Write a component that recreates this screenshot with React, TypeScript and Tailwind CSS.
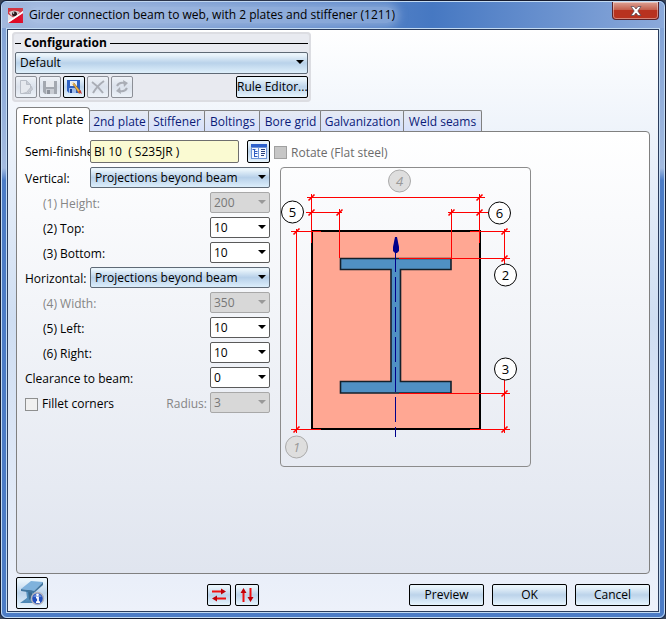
import { useState } from "react";
import clsx from "clsx";

const glossy =
  "border border-black bg-linear-to-b from-[#e9f4fb] from-10% via-[#bcd3ea] via-50% to-[#e6f4fd]";
const faded =
  "border border-[#8c8f96] bg-linear-to-b from-[#eef2f7] via-[#dbe2ec] to-[#edf2f8]";

const tabs = [
  { label: "2nd plate", width: "w-[59px]" },
  { label: "Stiffener", width: "w-[56px]" },
  { label: "Boltings", width: "w-[55px]" },
  { label: "Bore grid", width: "w-[61px]" },
  { label: "Galvanization", width: "w-[83px]" },
  { label: "Weld seams", width: "w-[77px]" },
];

function DropArrow({ disabled = false }: { disabled?: boolean }) {
  return (
    <svg
      viewBox="0 0 8 4"
      className={clsx(
        "pointer-events-none absolute top-2 right-1 h-1 w-2",
        disabled ? "fill-[#999]" : "fill-black"
      )}
    >
      <path d="M0 0h8L4 4z" />
    </svg>
  );
}

function NumberSelect({
  id,
  value,
  disabled = false,
}: {
  id: string;
  value: string;
  disabled?: boolean;
}) {
  return (
    <div className="relative w-[60px]">
      <select
        id={id}
        disabled={disabled}
        className={clsx(
          "block h-[21px] w-full appearance-none rounded-xs border pl-[3px] opacity-100",
          disabled ? "border-[#a8a8a8] bg-[#d8d8d8] text-[#777]" : "border-[#5a5a5a] bg-white"
        )}
      >
        <option>{value}</option>
      </select>
      <DropArrow disabled={disabled} />
    </div>
  );
}

function NumberRow({
  id,
  label,
  value,
  disabled = false,
  indent = true,
}: {
  id: string;
  label: string;
  value: string;
  disabled?: boolean;
  indent?: boolean;
}) {
  return (
    <div className="flex h-[25px] items-start justify-between">
      <label
        htmlFor={id}
        className={clsx("pt-1", indent && "pl-[18px]", disabled && "text-[#858585]")}
      >
        {label}
      </label>
      <NumberSelect id={id} value={value} disabled={disabled} />
    </div>
  );
}

function ModeRow({ id, label }: { id: string; label: string }) {
  return (
    <div className="flex h-[25px] items-start">
      <label htmlFor={id} className="w-[65px] pt-1">
        {label}
      </label>
      <div className="relative w-[180px]">
        <select
          id={id}
          className="block h-[21px] w-full appearance-none rounded-xs border border-[#5f6a76] bg-linear-to-b from-[#e9f4fb] from-10% via-[#b7d0e9] via-50% to-[#dceefb] pl-1"
        >
          <option>Projections beyond beam</option>
        </select>
        <DropArrow />
      </div>
    </div>
  );
}

/* ---------- icons ---------- */

function AppIcon() {
  return (
    <svg viewBox="0 0 15 15" className="size-[15px] shrink-0">
      <rect width="15" height="15" fill="#e8e4e6" />
      <path d="M0 0h15v3L6 10 0 6z" fill="#d3343f" />
      <path d="M1 4q5-3 11 0l-5 5q-5-1-6-5z" fill="#d9cfd0" />
      <circle cx="6.500" cy="6" r="2.500" fill="#2b1a1e" />
      <circle cx="5.500" cy="5" r="0.800" fill="#fff" />
      <path d="M0 15 15 5v10z" fill="#e00a26" />
      <path d="M0 13 15 3v2L0 15z" fill="#fff" />
    </svg>
  );
}

function NewIcon() {
  return (
    <svg viewBox="0 0 16 16" className="size-4" stroke="#b9bec7" fill="#e6e9ee">
      <path d="M2.500 1.500h6l4 4v9h-10z" />
      <path d="M8.500 1.500v4h4M13.500 7.500l1 3-5 4h-5l4-1z" fill="#c8ccd4" />
    </svg>
  );
}

function SaveIcon() {
  return (
    <svg viewBox="0 0 16 16" className="size-4">
      <path d="M1 2h14v13H3l-2-2z" fill="#a3a8b0" />
      <path d="M4 2h8v6H4z" fill="#e6e9ee" />
      <path d="M4 10h8v5H4z" fill="#c9cdd4" />
      <path d="M5 11h3v4H5z" fill="#8d929b" />
    </svg>
  );
}

function SaveAsIcon() {
  return (
    <svg viewBox="0 0 16 16" className="size-4">
      <path d="M1 1h13v13H3l-2-2z" fill="#2f62c4" />
      <path d="M4 2h7v5H4z" fill="#e8effa" />
      <path d="M3 9h7v5H3z" fill="#9fbdeb" />
      <path d="M4 10h2v4H4z" fill="#1d418f" />
      <path d="m6 4 2 0 7 9-2 1.500z" fill="#f0b648" stroke="#8d5f22" strokeWidth=".6" />
      <path d="m12 13 2.500-2 1.500 4z" fill="#c83a35" />
      <path d="m5 3 3 .8L6.500 5.500z" fill="#fdeecb" />
    </svg>
  );
}

function DeleteIcon() {
  return (
    <svg viewBox="0 0 16 16" className="size-4" stroke="#a9adb5" strokeWidth="2" fill="none">
      <path d="M2 3q6 4 11 11M14 2Q7 7 3 14" />
    </svg>
  );
}

function RefreshIcon() {
  return (
    <svg viewBox="0 0 16 16" className="size-4" fill="none" stroke="#a9adb5" strokeWidth="2">
      <path d="M3 7q2-4 7-3M13 9q-2 4-7 3" />
      <path d="M9 1l5 3-4 4zM7 15l-5-3 4-4z" fill="#a9adb5" stroke="none" />
    </svg>
  );
}

function CatalogIcon() {
  return (
    <svg viewBox="0 0 16 16" className="size-4">
      <path d="M0 0h16v15H0z" fill="#6f95d8" />
      <path d="M0 0h16v3H0z" fill="#2f62cc" />
      <path d="M1 4h6v10H1zM8 4h7v10H8z" fill="#f5f9ff" />
      <path d="M1.500 5.500h3M3.500 5v8M4 7.500h2.500M4 9.500h2.500M4 12.500h2.500" stroke="#2f5cc0" />
      <path d="M10 5.500h4M10 7.500h4M10 9.500h4M10 11.500h3" stroke="#27407c" />
    </svg>
  );
}

function BeamInfoIcon() {
  return (
    <svg viewBox="0 0 26 26" className="size-[26px]">
      <path d="M1 23 8 18l11-1-4 6z" fill="#4e88b5" />
      <path d="M7 10l8-1v10l-9 3 2-4z" fill="#5590bd" />
      <path d="M9 10l4 0v8l-3 2z" fill="#38698f" />
      <path d="M2 9 12 1l12 1-9 9z" fill="#7fb2dc" />
      <path d="M2 9v2l13 2v-2zM15 11v2l9-8V2z" fill="#42769f" />
      <circle cx="18.500" cy="18.500" r="6" fill="#2350bd" stroke="#b3b4bd" strokeWidth="1.500" />
      <path d="M14.500 16q4-4 8 0v1h-8z" fill="#5f86dc" />
      <path d="M17 17.500h2V22M17 22.200h4" stroke="#fff" strokeWidth="1.800" fill="none" />
      <circle cx="18.500" cy="14.800" r="1.300" fill="#fff" />
    </svg>
  );
}

function SwapIcon({ vertical = false }: { vertical?: boolean }) {
  return (
    <svg viewBox="0 0 16 16" className="size-4">
      {vertical ? (
        <>
          <path d="M4.500 15V5M11.500 1v10" stroke="#f01010" strokeWidth="2" />
          <path d="M1.500 6l3-5 3 5zM8.500 10l3 5 3-5z" fill="#c00008" />
        </>
      ) : (
        <>
          <path d="M1 4.500h10M15 11.500H5" stroke="#f01010" strokeWidth="2" />
          <path d="M10 1.500l5 3-5 3zM6 8.500l-5 3 5 3z" fill="#c00008" />
        </>
      )}
    </svg>
  );
}

/* ---------- plate drawing ---------- */

const ticks = [
  [311.5, 197.5],
  [479.5, 197.5],
  [311.5, 212.5],
  [339.5, 212.5],
  [451.5, 212.5],
  [479.5, 212.5],
  [296.5, 231.5],
  [296.5, 429.5],
  [504.5, 231.5],
  [504.5, 258.5],
  [504.5, 393.5],
  [504.5, 429.5],
];

const callouts = [
  { n: 1, x: 296.5, y: 447, off: true },
  { n: 2, x: 505.5, y: 275 },
  { n: 3, x: 505.5, y: 369 },
  { n: 4, x: 399.5, y: 181, off: true },
  { n: 5, x: 292.5, y: 212 },
  { n: 6, x: 499.5, y: 213 },
];

function PlateDrawing() {
  return (
    <svg viewBox="281 168 249 298" className="block h-[298px] w-[249px]">
      <rect x="312" y="231" width="168" height="198" fill="#ffa793" stroke="#000" strokeWidth="2" />
      <path
        d="M340.500 258.500H451V269.500H400.500V381.500H451V393H340.500V381.500H391V269.500H340.500Z"
        fill="#5090c4"
        stroke="#14202b"
        strokeWidth="1.600"
      />
      <path d="M395.500 247V437" stroke="#00008b" strokeDasharray="25 5" />
      <path d="M395 237h2l2 10v4l-2 2h-2l-2-2v-4z" fill="#00008b" />
      <g stroke="#f00" fill="none">
        <path d="M311.500 194V243M479.500 194V243M307 197.500H485" />
        <path d="M306 212.500H342M339.500 209V258M448 212.500H488M451.500 209V258" />
        <path d="M296.500 229V433M291 231.500H321M291 429.500H321" />
        <path d="M504.500 229V264M470 231.500H510M399 258.500H510" />
        <path d="M504.500 380V433M399 393.500H510M470 429.500H510" />
        {ticks.map(([x, y]) => (
          <path
            key={`${x}-${y}`}
            d={`M${x - 3} ${y + 3}L${x + 3} ${y - 3}`}
            strokeWidth="1.600"
          />
        ))}
      </g>
      {callouts.map((c) => (
        <g key={c.n}>
          <circle
            cx={c.x}
            cy={c.y}
            r="11"
            fill={c.off ? "#dedede" : "#fff"}
            stroke={c.off ? "#aaa" : "#000"}
          />
          <text
            x={c.x}
            y={c.y + 5}
            textAnchor="middle"
            className={clsx("text-[13px]", c.off ? "fill-[#999] italic" : "fill-black")}
          >
            {c.n}
          </text>
        </g>
      ))}
    </svg>
  );
}

/* ---------- dialog ---------- */

function Configuration() {
  return (
    <fieldset className="ml-1 w-[299px] rounded-sm border-2 border-[#dcdde2] bg-[#e8eaf0] px-px pb-[2px]">
      <div className="flex h-[18px] items-center gap-[3px]">
        <span className="h-px w-[6px] bg-black" />
        <span className="font-bold">Configuration</span>
        <span className="h-px flex-1 bg-black" />
      </div>
      <div className="relative">
        <select
          aria-label="Configuration"
          className="block h-[22px] w-full appearance-none rounded-xs border border-[#5f6a76] bg-linear-to-b from-[#eaf4fb] from-10% via-[#b9d2ea] via-50% to-[#dff0fb] pl-1"
        >
          <option>Default</option>
        </select>
        <DropArrow />
      </div>
      <div className="mt-[2px] flex gap-[2px]">
        {[
          { name: "New", icon: <NewIcon /> },
          { name: "Save", icon: <SaveIcon /> },
          { name: "Save as", icon: <SaveAsIcon />, on: true },
          { name: "Delete", icon: <DeleteIcon /> },
          { name: "Refresh", icon: <RefreshIcon /> },
        ].map((b) => (
          <button
            key={b.name}
            aria-label={b.name}
            disabled={!b.on}
            className={clsx(
              "flex size-[22px] items-center justify-center rounded-xs",
              b.on ? glossy : faded
            )}
          >
            {b.icon}
          </button>
        ))}
        <button className={clsx("ml-auto h-[22px] w-[72px] rounded-xs whitespace-nowrap", glossy)}>
          Rule Editor...
        </button>
      </div>
    </fieldset>
  );
}

export default function App() {
  const [active, setActive] = useState("Front plate");

  return (
    <div className="min-h-screen bg-[#3a4558] font-['Open_Sans',sans-serif] text-[12px] leading-4 text-black">
      <div className="flex min-h-screen flex-col rounded-md border border-[#161c30] bg-[#4f7fc8]">
        <div className="flex flex-1 flex-col rounded-md border border-[#c3dbf3] bg-linear-to-b from-[#7d9fd4] from-0% via-[#a4bbe0] via-27% to-[#4c7cc6] to-29% px-1 pb-1">
          <header className="-mx-1 flex h-[26px] items-start rounded-t-md bg-linear-to-r from-[#a3b9de] from-0% via-[#4678c2] via-65% to-[#8ba9da] pl-[6px]">
            <div className="flex h-full flex-1 items-center gap-[6px]">
              <AppIcon />
              <h1 className="rounded-full bg-[#b3c8e8]/50 shadow-[0_0_8px_4px_rgb(179_200_232/0.5)]">
                Girder connection beam to web, with 2 plates and stiffener (1211)
              </h1>
            </div>
            <button
              aria-label="Close"
              className="mr-[5px] flex h-[18px] w-[47px] items-center justify-center rounded-b-sm border border-t-0 border-[#5b2229] bg-linear-to-b from-[#dba195] from-0% via-[#c4604e] via-45% to-[#b8321f] to-50% shadow-[inset_0_0_0_1px_rgb(255_255_255/0.4)]"
            >
              <svg viewBox="0 0 12 10" className="h-[10px] w-3">
                <path
                  d="M1 .5h3l2 2.500 2-2.500h3L7.800 5l3.200 4.500H8L6 7 4 9.500H1L4.200 5z"
                  fill="#fff"
                  stroke="#4f4350"
                  strokeWidth=".7"
                />
              </svg>
            </button>
          </header>

          <main className="flex flex-1 flex-col border border-[#c3dbf3]">
            <div className="flex flex-1 flex-col border border-[#2a3c5c] bg-linear-to-b from-white from-0% via-[#cfdef2] via-50% to-[#edf1fa] pt-[2px] pr-2 pb-px">
              <Configuration />

              <div className="mt-[5px] ml-2 flex flex-1 flex-col">
                <div role="tablist" className="flex h-6 items-end">
                  <button
                    role="tab"
                    aria-selected={active === "Front plate"}
                    onClick={() => setActive("Front plate")}
                    className="relative -mb-px h-[25px] w-[74px] rounded-t-sm border border-b-0 border-[#808080] bg-white"
                  >
                    Front plate
                  </button>
                  {tabs.map((t) => (
                    <button
                      key={t.label}
                      role="tab"
                      aria-selected={active === t.label}
                      onClick={() => setActive(t.label)}
                      className={clsx(
                        "-mx-px box-content h-[19px] rounded-t-xs border border-b-0 border-[#808080] bg-linear-to-b from-[#e6eaf3] to-[#d6e0fb] pt-px whitespace-nowrap text-[#0a1a78]",
                        t.width
                      )}
                    >
                      {t.label}
                    </button>
                  ))}
                </div>

                <section className="flex-1 rounded-sm rounded-tl-none border border-[#808080] bg-linear-to-b from-white to-[#e0e5ef] px-2 pt-2 pb-4">
                  <div className="flex h-[27px] items-start">
                    <label htmlFor="semi" className="w-[65px] pt-1 whitespace-nowrap">
                      Semi-finishe
                    </label>
                    <input
                      id="semi"
                      defaultValue="BI 10  ( S235JR )"
                      className="relative h-[23px] w-[149px] rounded-xs border border-[#6e6e6e] bg-[#fafad2] px-[3px] whitespace-pre"
                    />
                    <button
                      aria-label="Select semi-finished product"
                      className={clsx("ml-2 flex size-[23px] items-center justify-center rounded-xs", glossy)}
                    >
                      <CatalogIcon />
                    </button>
                    <label className="ml-1 flex h-[25px] items-center gap-1 text-[#6b6b6b]">
                      <input
                        type="checkbox"
                        disabled
                        className="size-[13px] appearance-none border border-[#a0a0a0] bg-[#c6c6c6]"
                      />
                      Rotate (Flat steel)
                    </label>
                  </div>

                  <div className="flex gap-[10px]">
                    <div className="w-[245px]">
                      <ModeRow id="vertical" label="Vertical:" />
                      <NumberRow id="height" label="(1) Height:" value="200" disabled />
                      <NumberRow id="top" label="(2) Top:" value="10" />
                      <NumberRow id="bottom" label="(3) Bottom:" value="10" />
                      <ModeRow id="horizontal" label="Horizontal:" />
                      <NumberRow id="width" label="(4) Width:" value="350" disabled />
                      <NumberRow id="left" label="(5) Left:" value="10" />
                      <NumberRow id="right" label="(6) Right:" value="10" />
                      <NumberRow id="clearance" label="Clearance to beam:" value="0" indent={false} />
                      <div className="flex h-[25px] items-start">
                        <label className="flex items-center gap-1 pt-1">
                          <input
                            type="checkbox"
                            className="size-[13px] appearance-none border border-[#8e8f8f] bg-[#f0f0f0] checked:bg-[#5090c4]"
                          />
                          Fillet corners
                        </label>
                        <label htmlFor="radius" className="mr-[3px] ml-auto pt-1 text-[#858585]">
                          Radius:
                        </label>
                        <NumberSelect id="radius" value="3" disabled />
                      </div>
                    </div>
                    <div className="self-start rounded-sm border border-[#8c8c8c]">
                      <PlateDrawing />
                    </div>
                  </div>
                </section>

                <footer className="mt-[2px] flex h-[34px] items-center">
                  <div className="w-[191px]">
                    <button
                      aria-label="Information"
                      className={clsx("flex size-8 items-center justify-center rounded-xs", glossy)}
                    >
                      <BeamInfoIcon />
                    </button>
                  </div>
                  <div className="flex gap-1 pt-1">
                    <button
                      aria-label="Swap horizontally"
                      className={clsx("flex h-[22px] w-6 items-center justify-center rounded-xs", glossy)}
                    >
                      <SwapIcon />
                    </button>
                    <button
                      aria-label="Swap vertically"
                      className={clsx("flex h-[22px] w-6 items-center justify-center rounded-xs", glossy)}
                    >
                      <SwapIcon vertical />
                    </button>
                  </div>
                  <div className="ml-auto flex gap-2 pt-1">
                    {["Preview", "OK", "Cancel"].map((label) => (
                      <button key={label} className={clsx("h-[22px] w-[75px] rounded-xs", glossy)}>
                        {label}
                      </button>
                    ))}
                  </div>
                </footer>
              </div>
            </div>
          </main>
        </div>
      </div>
    </div>
  );
}
